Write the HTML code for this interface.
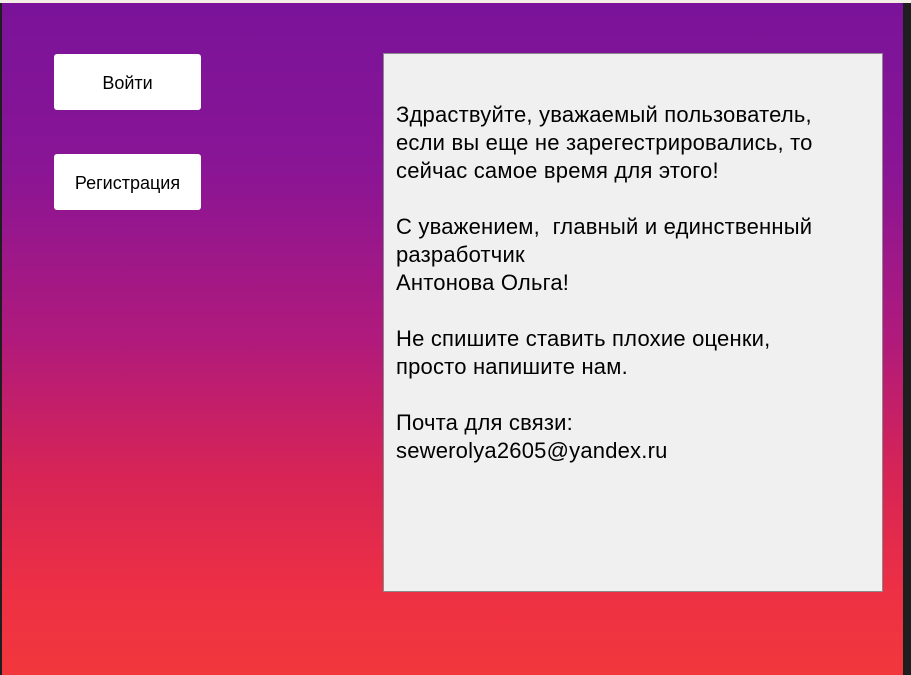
<!DOCTYPE html>
<html><head><meta charset="utf-8"><style>
html,body{margin:0;padding:0;width:911px;height:675px;overflow:hidden;background:#1e1e1e;}
.top{position:absolute;left:0;top:0;width:911px;height:3px;background:#f3efe6;}
.main{position:absolute;left:2px;top:3px;width:901px;height:672px;background:linear-gradient(180deg,#7a1399 0%,#8a1595 25%,#b01a7c 50%,#d62456 70%,#ee3044 88%,#f2373c 100%);}
.btn{position:absolute;left:54px;width:147px;height:56px;background:#fff;border-radius:3px;font:18px "Liberation Sans","DejaVu Sans",sans-serif;color:#000;display:flex;align-items:center;justify-content:center;padding-top:3px;box-sizing:border-box;}
.panel{position:absolute;left:383px;top:53px;width:498px;height:537px;background:#f0f0f0;border:1px solid #8a8a8a;}
.txt{position:absolute;left:12px;top:47px;font:22px/28px "Liberation Sans","DejaVu Sans",sans-serif;letter-spacing:0.2px;color:#000;white-space:pre;}
</style></head><body>
<div class="top"></div>
<div class="main"></div>
<div class="btn" style="top:54px">Войти</div>
<div class="btn" style="top:154px">Регистрация</div>
<div class="panel"><div class="txt">Здраствуйте, уважаемый пользователь,
если вы еще не зарегестрировались, то
сейчас самое время для этого!

С уважением,  главный и единственный
разработчик
Антонова Ольга!

Не спишите ставить плохие оценки,
просто напишите нам.

Почта для связи:
sewerolya2605@yandex.ru</div></div>
</body></html>
